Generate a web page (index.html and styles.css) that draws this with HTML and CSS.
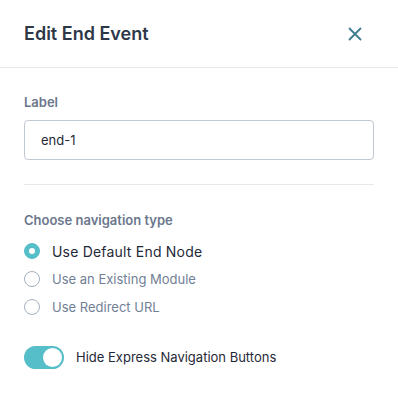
FILE: index.html
```html
<!DOCTYPE html>
<html>
<head>
<meta charset="utf-8">
<link rel="stylesheet" href="styles.css">
</head>
<body>
<div class="panel">
  <div class="header">
    <h1 class="title">Edit End Event</h1>
    <button class="close" aria-label="Close">
      <svg width="24" height="24" viewBox="0 0 24 24"><path d="M6.5 6.5 L17.5 17.5 M17.5 6.5 L6.5 17.5" stroke="currentColor" stroke-width="1.8" stroke-linecap="round" fill="none"/></svg>
    </button>
  </div>
  <div class="body">
    <div class="field-label">Label</div>
    <div class="input">end-1</div>
    <div class="divider"></div>
    <div class="field-label">Choose navigation type</div>
    <div class="radios">
      <div class="radio-row selected"><span class="radio"></span><span>Use Default End Node</span></div>
      <div class="radio-row"><span class="radio"></span><span>Use an Existing Module</span></div>
      <div class="radio-row"><span class="radio"></span><span>Use Redirect URL</span></div>
    </div>
    <div class="toggle-row">
      <span class="toggle"><span class="knob"></span></span>
      <span>Hide Express Navigation Buttons</span>
    </div>
  </div>
</div>
</body>
</html>
```

FILE: styles.css
```css
* { box-sizing: border-box; }
html, body { margin: 0; padding: 0; background: #fff; }
body { font-family: Inter, "Noto Sans", sans-serif; color: #1a202c; }
.panel { width: 398px; }
.header {
  height: 68px;
  display: flex;
  align-items: center;
  justify-content: space-between;
  padding: 0 31px 0 24px;
  border-bottom: 1px solid #e5e8ec;
}
.title { margin: 0; font-size: 18px; font-weight: 600; color: #2d3748; line-height: 24px; }
.close { border: 0; background: none; padding: 0; width: 24px; height: 24px; color: #3e7b8f; display: flex; }
.body { padding: 24px 24px 0 24px; }
.field-label { font-size: 13px; font-weight: 600; color: #6b778c; line-height: 20px; }
.input {
  margin-top: 8px;
  height: 40px;
  border: 1px solid #c0c8d2;
  border-radius: 4px;
  padding: 0 16px;
  display: flex;
  align-items: center;
  font-size: 13px;
  color: #1f2937;
}
.divider { height: 1px; background: #e5e8ec; margin: 24px 0 25px; }
.radios { margin-top: 7px; }
.radio-row { height: 28px; display: flex; align-items: center; gap: 12px; font-size: 13px; color: #718096; }
.radio-row.selected { color: #1f2937; font-size: 14px; letter-spacing: 0.2px; }
.radio { width: 16px; height: 16px; border-radius: 50%; border: 1.5px solid #a6b1bf; flex: none; display: flex; align-items: center; justify-content: center; }
.radio-row.selected .radio { background: #56bec8; border-color: #56bec8; }
.radio-row.selected .radio::after { content: ""; width: 6px; height: 6px; border-radius: 50%; background: #fff; }
.toggle-row { margin-top: 24px; display: flex; align-items: center; gap: 12px; font-size: 13px; color: #1f2937; height: 24px; }
.toggle { width: 40px; height: 23px; border-radius: 12px; background: #56bec8; display: flex; align-items: center; justify-content: flex-end; padding: 0 2px; flex: none; }
.knob { width: 19px; height: 19px; border-radius: 50%; background: #fff; }
```
